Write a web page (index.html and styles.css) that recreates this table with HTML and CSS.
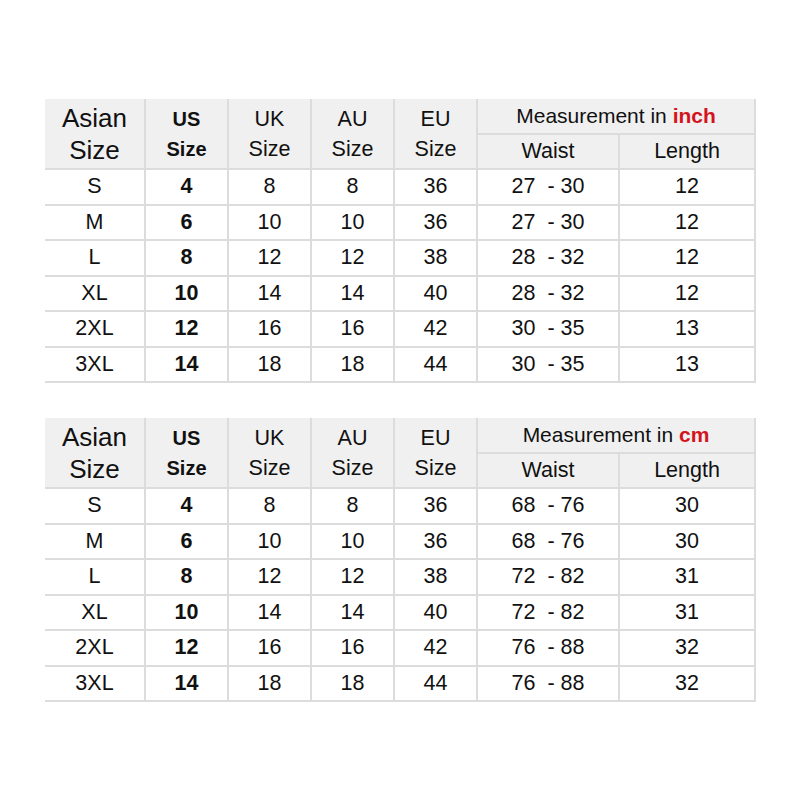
FILE: index.html
```html
<!DOCTYPE html>
<html>
<head>
<meta charset="utf-8">
<link rel="stylesheet" href="styles.css">
</head>
<body>
<div class="page">
  <table class="chart">
    <colgroup>
      <col class="c-asian"><col class="c-std"><col class="c-std"><col class="c-std"><col class="c-std"><col class="c-waist"><col class="c-len">
    </colgroup>
    <thead>
      <tr class="h1">
        <th rowspan="2" class="big">Asian<br>Size</th>
        <th rowspan="2" class="us">US<br>Size</th>
        <th rowspan="2" class="mid">UK<br>Size</th>
        <th rowspan="2" class="mid">AU<br>Size</th>
        <th rowspan="2" class="mid">EU<br>Size</th>
        <th colspan="2" class="meas">Measurement in <span class="unit">inch</span></th>
      </tr>
      <tr class="h2">
        <th class="sub">Waist</th>
        <th class="sub">Length</th>
      </tr>
    </thead>
    <tbody>
      <tr><td>S</td><td class="b">4</td><td>8</td><td>8</td><td>36</td><td class="rng">27  - 30</td><td>12</td></tr>
      <tr><td>M</td><td class="b">6</td><td>10</td><td>10</td><td>36</td><td class="rng">27  - 30</td><td>12</td></tr>
      <tr><td>L</td><td class="b">8</td><td>12</td><td>12</td><td>38</td><td class="rng">28  - 32</td><td>12</td></tr>
      <tr><td>XL</td><td class="b">10</td><td>14</td><td>14</td><td>40</td><td class="rng">28  - 32</td><td>12</td></tr>
      <tr><td>2XL</td><td class="b">12</td><td>16</td><td>16</td><td>42</td><td class="rng">30  - 35</td><td>13</td></tr>
      <tr><td>3XL</td><td class="b">14</td><td>18</td><td>18</td><td>44</td><td class="rng">30  - 35</td><td>13</td></tr>
    </tbody>
  </table>

  <table class="chart">
    <colgroup>
      <col class="c-asian"><col class="c-std"><col class="c-std"><col class="c-std"><col class="c-std"><col class="c-waist"><col class="c-len">
    </colgroup>
    <thead>
      <tr class="h1">
        <th rowspan="2" class="big">Asian<br>Size</th>
        <th rowspan="2" class="us">US<br>Size</th>
        <th rowspan="2" class="mid">UK<br>Size</th>
        <th rowspan="2" class="mid">AU<br>Size</th>
        <th rowspan="2" class="mid">EU<br>Size</th>
        <th colspan="2" class="meas">Measurement in <span class="unit">cm</span></th>
      </tr>
      <tr class="h2">
        <th class="sub">Waist</th>
        <th class="sub">Length</th>
      </tr>
    </thead>
    <tbody>
      <tr><td>S</td><td class="b">4</td><td>8</td><td>8</td><td>36</td><td class="rng">68  - 76</td><td>30</td></tr>
      <tr><td>M</td><td class="b">6</td><td>10</td><td>10</td><td>36</td><td class="rng">68  - 76</td><td>30</td></tr>
      <tr><td>L</td><td class="b">8</td><td>12</td><td>12</td><td>38</td><td class="rng">72  - 82</td><td>31</td></tr>
      <tr><td>XL</td><td class="b">10</td><td>14</td><td>14</td><td>40</td><td class="rng">72  - 82</td><td>31</td></tr>
      <tr><td>2XL</td><td class="b">12</td><td>16</td><td>16</td><td>42</td><td class="rng">76  - 88</td><td>32</td></tr>
      <tr><td>3XL</td><td class="b">14</td><td>18</td><td>18</td><td>44</td><td class="rng">76  - 88</td><td>32</td></tr>
    </tbody>
  </table>
</div>
</body>
</html>
```

FILE: styles.css
```css
html, body {
  margin: 0;
  padding: 0;
  background: #ffffff;
}

.page {
  padding: 99px 0 0 45px;
  display: flex;
  flex-direction: column;
  gap: 35px;
  font-family: "Liberation Sans", Arial, sans-serif;
  color: #111111;
}

.chart {
  border-collapse: collapse;
  table-layout: fixed;
  width: 710px;
}

.c-asian { width: 100px; }
.c-std { width: 83px; }
.c-waist { width: 142px; }
.c-len { width: 136px; }

.chart th,
.chart td {
  padding: 0;
  text-align: center;
  border: 2px solid #dcdcdc;
}

.chart tr > :first-child {
  border-left: none;
}

.chart thead tr.h1 > * {
  border-top: none;
}

.chart th {
  background: #f0f0f0;
  font-weight: normal;
}

.h1 { height: 35px; }
.h2 { height: 35px; }

.big {
  font-size: 26px;
  line-height: 32px;
}

.us {
  font-size: 20px;
  font-weight: bold !important;
  line-height: 30px;
}

.mid {
  font-size: 21.5px;
  line-height: 30px;
}

.meas {
  font-size: 21px;
}

.unit {
  color: #d4141c;
  font-weight: bold;
}

.sub {
  font-size: 21.5px;
}

.chart td {
  height: 33.5px;
  font-size: 21.5px;
}

.b {
  font-weight: bold;
  font-size: 20.5px;
}

.rng {
  white-space: pre;
}
```
